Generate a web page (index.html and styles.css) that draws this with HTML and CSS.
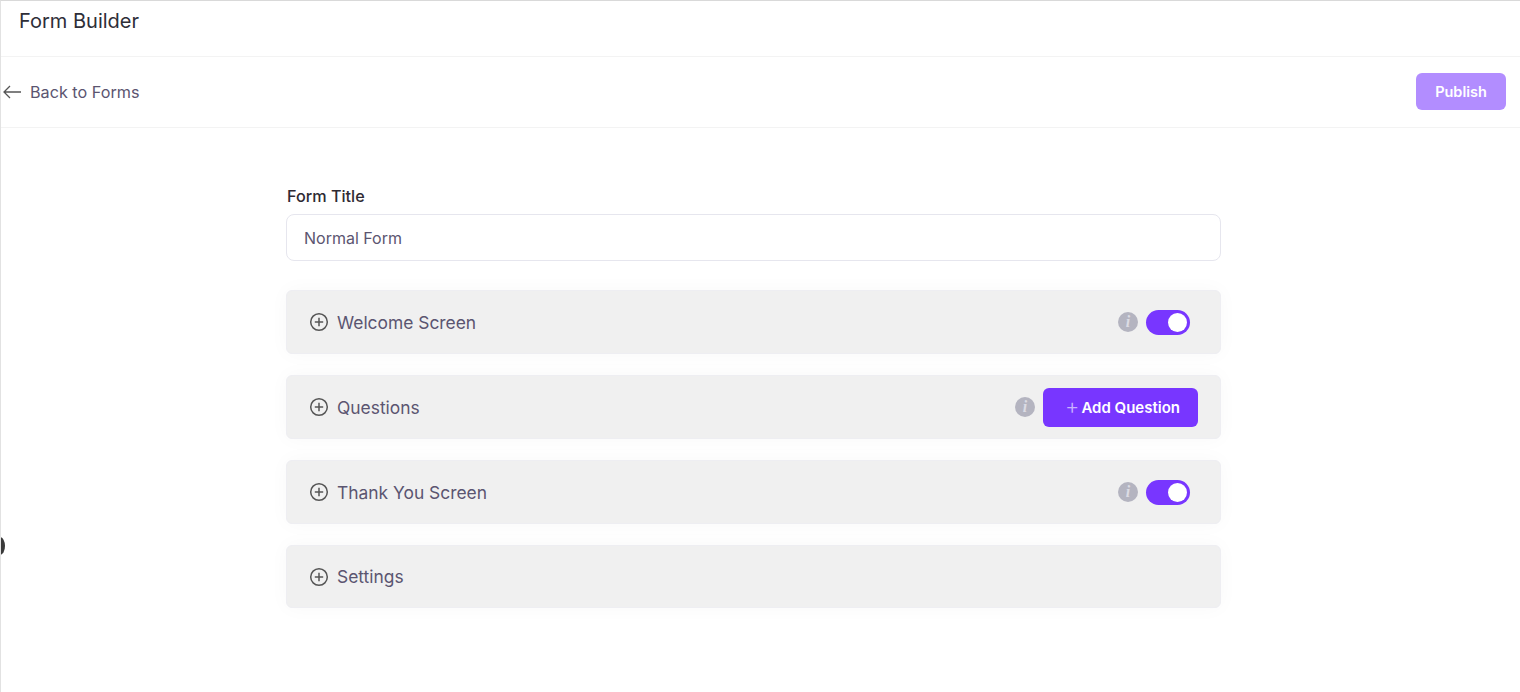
FILE: index.html
```html
<!DOCTYPE html>
<html lang="en">
<head>
    <meta charset="UTF-8">
    <meta name="viewport" content="width=device-width, initial-scale=1.0">
    <title>Form Builder</title>
    <link rel="stylesheet" href="styles.css">
</head>
<body>
    <span class="edge-dot"></span>
    <header class="page-header">
        <h1>Form Builder</h1>
    </header>
    <nav class="top-bar">
        <a class="back-link" href="#">
            <svg width="20" height="14" viewBox="0 0 20 14" fill="none" stroke="#555" stroke-width="1.3">
                <path d="M19 7H2M8 1L2 7l6 6"/>
            </svg>
            Back to Forms
        </a>
        <button type="button" class="publish-btn">Publish</button>
    </nav>
    <main class="builder">
        <label class="field-label" for="title">Form Title</label>
        <input class="title-input" type="text" id="title" value="Normal Form">

        <section class="panel">
            <div class="panel-name">
                <svg class="plus-icon" width="20" height="20" viewBox="0 0 20 20" fill="none" stroke="#555" stroke-width="1.5">
                    <circle cx="10" cy="10" r="8.3"/>
                    <path d="M10 5.8v8.4M5.8 10h8.4"/>
                </svg>
                Welcome Screen
            </div>
            <div class="panel-actions toggle-actions">
                <span class="info-badge">i</span>
                <span class="toggle"><span class="knob"></span></span>
            </div>
        </section>

        <section class="panel">
            <div class="panel-name">
                <svg class="plus-icon" width="20" height="20" viewBox="0 0 20 20" fill="none" stroke="#555" stroke-width="1.5">
                    <circle cx="10" cy="10" r="8.3"/>
                    <path d="M10 5.8v8.4M5.8 10h8.4"/>
                </svg>
                Questions
            </div>
            <div class="panel-actions">
                <span class="info-badge">i</span>
                <button type="button" class="add-btn"><span class="add-plus">+</span>Add Question</button>
            </div>
        </section>

        <section class="panel">
            <div class="panel-name">
                <svg class="plus-icon" width="20" height="20" viewBox="0 0 20 20" fill="none" stroke="#555" stroke-width="1.5">
                    <circle cx="10" cy="10" r="8.3"/>
                    <path d="M10 5.8v8.4M5.8 10h8.4"/>
                </svg>
                Thank You Screen
            </div>
            <div class="panel-actions toggle-actions">
                <span class="info-badge">i</span>
                <span class="toggle"><span class="knob"></span></span>
            </div>
        </section>

        <section class="panel panel-last">
            <div class="panel-name">
                <svg class="plus-icon" width="20" height="20" viewBox="0 0 20 20" fill="none" stroke="#555" stroke-width="1.5">
                    <circle cx="10" cy="10" r="8.3"/>
                    <path d="M10 5.8v8.4M5.8 10h8.4"/>
                </svg>
                Settings
            </div>
        </section>
    </main>
</body>
</html>
```

FILE: styles.css
```css
* {
    box-sizing: border-box;
}

html, body {
    height: 100%;
}

body {
    margin: 0;
    font-family: Inter, "Liberation Sans", sans-serif;
    background-color: #fff;
    border-top: 1px solid #d9d9d9;
    border-left: 1px solid #e2e2e2;
    overflow: hidden;
    position: relative;
}

.edge-dot {
    position: absolute;
    left: -6px;
    top: 536px;
    width: 10px;
    height: 18px;
    border-radius: 50%;
    background-color: #3a3a3a;
}

.page-header {
    height: 56px;
    padding: 8px 0 0 18px;
    border-bottom: 1px solid #f3f3f3;
}

.page-header h1 {
    margin: 0;
    font-size: 20px;
    line-height: 24px;
    font-weight: 400;
    color: #2e2e38;
}

.top-bar {
    height: 71px;
    padding: 0 14px 1px 1px;
    display: flex;
    align-items: center;
    justify-content: space-between;
    border-bottom: 1px solid #f3f3f3;
}

.back-link {
    display: flex;
    align-items: center;
    gap: 8px;
    font-size: 16.2px;
    color: #5b5570;
    text-decoration: none;
}

.publish-btn {
    width: 90px;
    height: 37px;
    border: none;
    border-radius: 6px;
    background-color: #b28dff;
    color: #fff;
    font-family: inherit;
    font-size: 14.5px;
    font-weight: 600;
}

.builder {
    width: 935px;
    margin-left: 285px;
    padding-top: 59px;
    display: flex;
    flex-direction: column;
}

.field-label {
    font-size: 16.2px;
    line-height: 18px;
    font-weight: 500;
    color: #2e2a33;
    padding-left: 1px;
    margin-bottom: 9px;
}

.title-input {
    height: 47px;
    padding: 0 17px;
    border: 1px solid #e6e6ee;
    border-radius: 8px;
    font-family: inherit;
    font-size: 16px;
    color: #5b5570;
    margin-bottom: 29px;
}

.panel {
    height: 64px;
    margin-bottom: 21px;
    padding: 0 22px;
    display: flex;
    align-items: center;
    justify-content: space-between;
    background-color: #f0f0f0;
    border: 1px solid #eeeef2;
    border-radius: 6px;
    box-shadow: 0 0 20px rgba(0, 0, 0, 0.03);
}

.panel-last {
    height: 63px;
}

.panel-name {
    display: flex;
    align-items: center;
    gap: 8px;
    font-size: 17.4px;
    color: #5b5570;
}

.panel-actions {
    display: flex;
    align-items: center;
    gap: 8px;
}

.toggle-actions {
    margin-right: 8px;
}

.info-badge {
    width: 20px;
    height: 20px;
    border-radius: 50%;
    background-color: #b4b4c0;
    color: #dcdce4;
    font-family: "Liberation Serif", serif;
    font-size: 16px;
    font-style: italic;
    font-weight: 700;
    line-height: 20px;
    text-align: center;
}

.toggle {
    width: 44px;
    height: 25px;
    padding: 3px;
    border-radius: 13px;
    background-color: #7836ff;
    display: flex;
    justify-content: flex-end;
}

.knob {
    width: 19px;
    height: 19px;
    border-radius: 50%;
    background-color: #fff;
}

.add-btn {
    width: 155px;
    height: 39px;
    margin-top: 1px;
    padding: 0 0 0 4px;
    border: none;
    border-radius: 6px;
    background-color: #7836ff;
    color: #fff;
    font-family: inherit;
    font-size: 15px;
    font-weight: 600;
    display: flex;
    align-items: center;
    justify-content: center;
    gap: 2px;
}

.add-plus {
    font-size: 22px;
    font-weight: 300;
    color: #c9b0ff;
    line-height: 18px;
    margin-top: -3px;
}
```
